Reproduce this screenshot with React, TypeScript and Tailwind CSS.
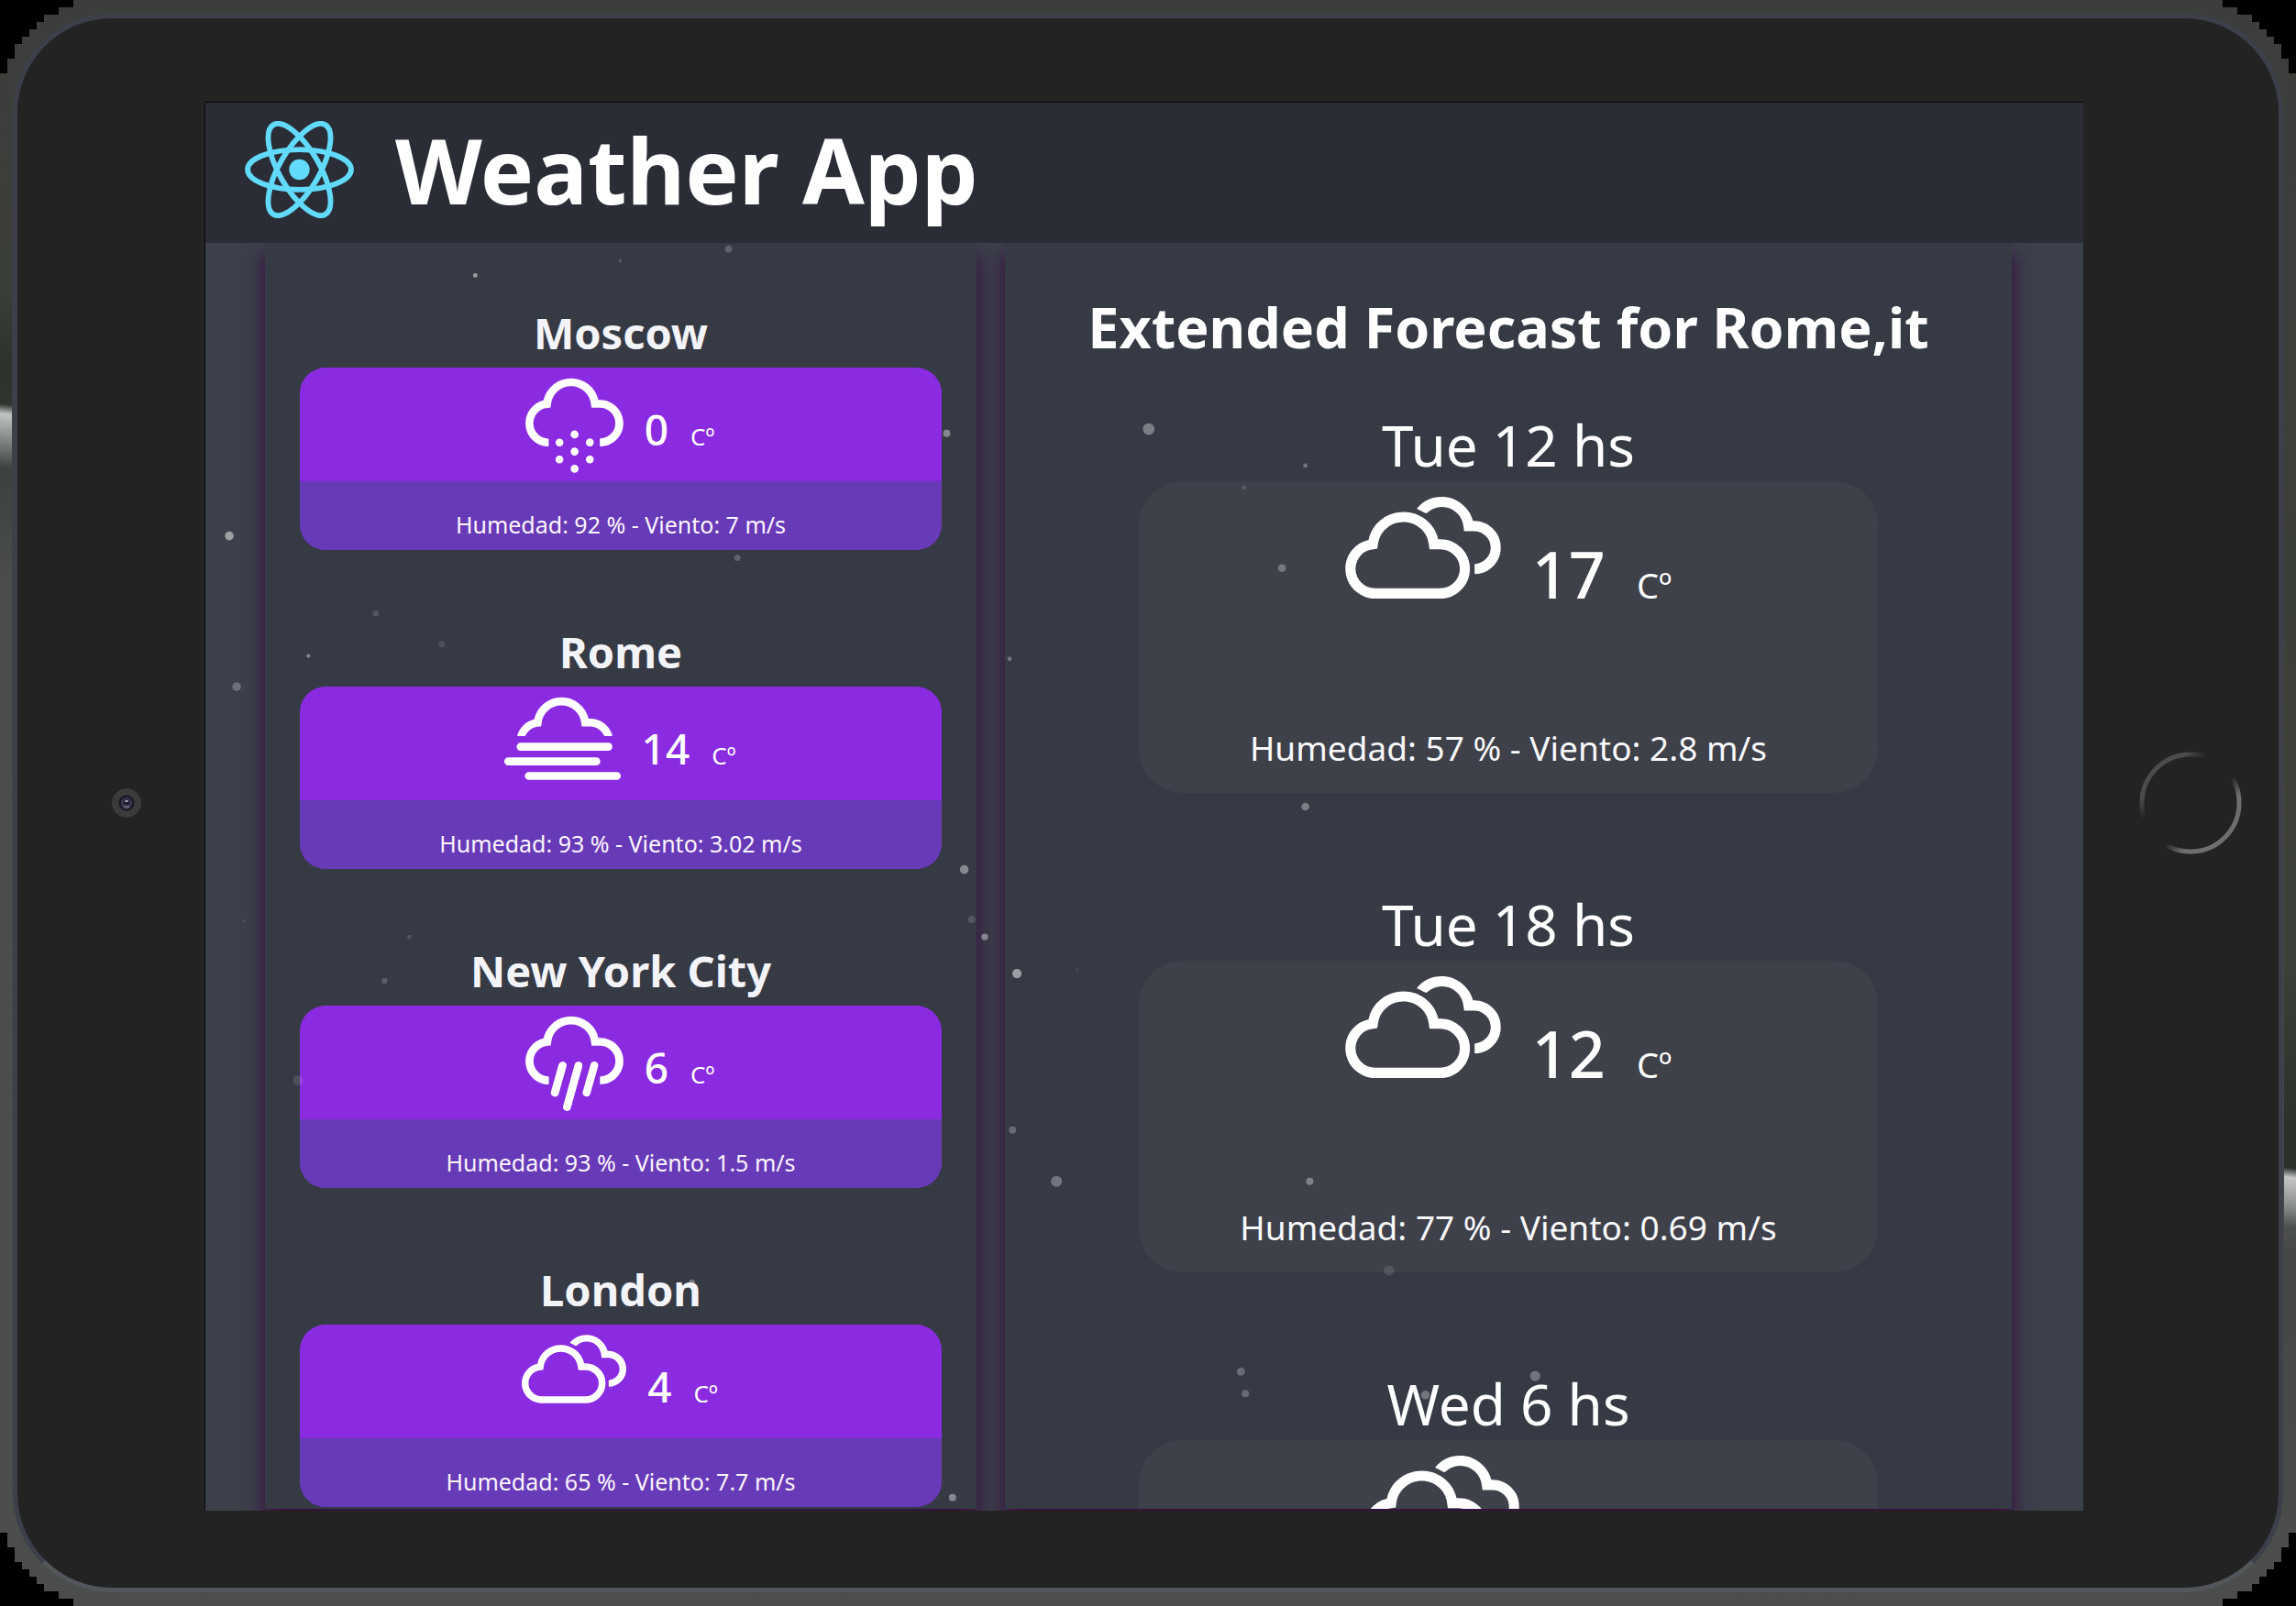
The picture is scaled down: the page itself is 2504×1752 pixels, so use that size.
import type { IconType } from "react-icons";
import { WiSnow, WiFog, WiRain, WiCloudy } from "react-icons/wi";

type Icon = { glyph: IconType; viewBox: string; size: string };

const snow: Icon = { glyph: WiSnow, viewBox: "4.64 7.3 20.72 20.2", size: "w-[107px] h-[104px]" };
const fog: Icon = { glyph: WiFog, viewBox: "2.62 7.3 24.75 20.2", size: "w-[127px] h-[104px]" };
const rain: Icon = { glyph: WiRain, viewBox: "4.64 7.3 20.73 20.2", size: "w-[107px] h-[104px]" };
const cloudy: Icon = { glyph: WiCloudy, viewBox: "3.89 7.3 22.21 20.2", size: "w-[114px] h-[104px]" };

const cities = [
  { name: "Moscow", icon: snow, temp: 0, details: "Humedad: 92 % - Viento: 7 m/s" },
  { name: "Rome", icon: fog, temp: 14, details: "Humedad: 93 % - Viento: 3.02 m/s" },
  { name: "New York City", icon: rain, temp: 6, details: "Humedad: 93 % - Viento: 1.5 m/s" },
  { name: "London", icon: cloudy, temp: 4, details: "Humedad: 65 % - Viento: 7.7 m/s" },
];

const forecast = [
  { when: "Tue 12 hs", temp: 17, details: "Humedad: 57 % - Viento: 2.8 m/s" },
  { when: "Tue 18 hs", temp: 12, details: "Humedad: 77 % - Viento: 0.69 m/s" },
  { when: "Wed 6 hs", temp: 9, details: "" },
];

// x, y, radius, opacity
const particles = [
  [324, 188, 1.5, 0.5], [423, 178, 1, 0.2], [497, 170, 2.5, 0.2], [646, 296, 2.5, 0.4],
  [156, 366, 3, 0.5], [161, 469, 3, 0.25], [210, 448, 1.3, 0.4], [256, 419, 2, 0.15],
  [301, 440, 2.2, 0.12], [503, 381, 2.2, 0.2], [784, 293, 4, 0.35], [891, 318, 1.5, 0.3],
  [849, 333, 1.5, 0.15], [875, 388, 2.7, 0.3], [689, 450, 1.5, 0.3], [891, 551, 2.7, 0.35],
  [658, 594, 3, 0.4], [663, 628, 2.5, 0.15], [672, 640, 2.3, 0.4], [694, 665, 3.2, 0.5],
  [735, 662, 0.8, 0.1], [279, 640, 1.5, 0.15], [262, 670, 2, 0.18], [166, 629, 1, 0.1],
  [203, 738, 3.5, 0.12], [691, 772, 2.5, 0.25], [721, 807, 3.8, 0.3], [894, 807, 2.5, 0.35],
  [948, 868, 3.5, 0.12], [847, 937, 2.8, 0.25], [850, 952, 2.5, 0.25], [1048, 940, 3.5, 0.3],
  [973, 953, 3, 0.3], [650, 1023, 2.5, 0.4], [472, 876, 2, 0.3],
];

function ReactLogo() {
  return (
    <svg viewBox="-11.7 -10.4 23.4 20.8" className="h-[106px] w-[119px] shrink-0" aria-hidden="true">
      <circle r="2.2" fill="#61dafb" />
      <g fill="none" stroke="#61dafb" strokeWidth="1.15">
        <ellipse rx="11.1" ry="4.3" />
        <ellipse rx="11.1" ry="4.3" transform="rotate(60)" />
        <ellipse rx="11.1" ry="4.3" transform="rotate(120)" />
      </g>
    </svg>
  );
}

function Corner({ className }: { className: string }) {
  return (
    <svg viewBox="0 0 80 80" shapeRendering="crispEdges" className={`absolute size-20 ${className}`} aria-hidden="true">
      <path d="M0 0H80V8H64V16H48V24H40V32H32V40H24V48H16V64H8V80H0Z" fill="#000" />
    </svg>
  );
}

function Camera() {
  return (
    <svg viewBox="0 0 32 32" className="size-8" aria-hidden="true">
      <circle cx="16" cy="16" r="16" fill="#3b3b3b" />
      <circle cx="16" cy="16" r="8.5" fill="#17151f" />
      <circle cx="16" cy="16" r="6.5" fill="#35324a" />
      <ellipse cx="16" cy="20" rx="3.5" ry="2" fill="#5c5a70" />
      <circle cx="16" cy="15.5" r="3" fill="#1d1b2c" />
      <ellipse cx="16" cy="14" rx="1.6" ry="1" fill="#cfcfe0" />
    </svg>
  );
}

function HomeRing() {
  return (
    <svg viewBox="0 0 112 112" className="size-28" aria-hidden="true">
      <defs>
        <linearGradient id="ring" x1="0.15" y1="0.15" x2="0.85" y2="0.85">
          <stop offset="0" stopColor="#4c4c4c" />
          <stop offset="0.1" stopColor="#4c4c4c" />
          <stop offset="0.27" stopColor="#4c4c4c" stopOpacity="0" />
          <stop offset="0.62" stopColor="#6e6e6e" stopOpacity="0" />
          <stop offset="0.8" stopColor="#6e6e6e" />
          <stop offset="1" stopColor="#6e6e6e" />
        </linearGradient>
      </defs>
      <circle cx="56" cy="56" r="53" fill="none" stroke="url(#ring)" strokeWidth="5" />
    </svg>
  );
}

function CityCard({ name, icon, temp, details }: (typeof cities)[number]) {
  const Glyph = icon.glyph;
  return (
    <article>
      <h2 className="text-center text-[47px] leading-[76px] font-bold text-[#f3f4f8]">{name}</h2>
      <div className="overflow-hidden rounded-[28px] bg-[#8a2be2]">
        <div className="flex justify-center gap-[23px] pt-[11px] pr-[2px] pb-px">
          <Glyph viewBox={icon.viewBox} className={icon.size} />
          <p className="flex items-baseline gap-6">
            <span className="text-[46px] leading-[112px] font-medium">{temp}</span>
            <span className="text-[26px] leading-[26px]">Cº</span>
          </p>
        </div>
        <p className="bg-[#673ab7] pt-5 text-center text-[25px] leading-[55px] text-[#fbf5ff]">{details}</p>
      </div>
    </article>
  );
}

function ForecastCard({ when, temp, details }: (typeof forecast)[number]) {
  return (
    <article>
      <h3 className="text-center text-[62px] leading-[79px]">{when}</h3>
      <div className="rounded-[48px] bg-[#3e404a]">
        <div className="flex justify-center gap-[34px] pt-[17px]">
          <WiCloudy viewBox="3.89 7.3 22.21 14.55" className="h-[111px] w-[170px]" />
          <p className="flex items-baseline gap-[34px]">
            <span className="text-[70px] leading-[168px] font-medium">{temp}</span>
            <span className="text-[38px] leading-[38px]">Cº</span>
          </p>
        </div>
        <p className="mt-[57px] min-h-[98px] text-center text-[37px] leading-[98px] text-[#f8f9fb]">{details}</p>
      </div>
    </article>
  );
}

export default function App() {
  return (
    <div className="relative flex h-screen overflow-hidden bg-linear-to-b from-[#3c3e3b] to-[#4c4e4b] px-[14px] py-[15px] font-['Noto_Sans','Open_Sans',sans-serif] text-white">
      <div className="absolute inset-y-0 left-0 w-[13px] bg-[linear-gradient(186deg,#3c3e3b_0%,#3b3f39_18%,#2c312c_23%,#303530_25.2%,#bfc3c4_25.8%,#8a8f8e_27.2%,#5c615f_28.4%,#3a4040_29.2%,#3f4444_31%,#4a4d49_36%,#4c4e4b_100%)]" />
      <div className="absolute inset-y-0 right-0 w-[13px] bg-[linear-gradient(186deg,#3c3e3b_0%,#3b4038_60%,#2c312c_70%,#2c312c_72.7%,#c4c6c7_73.3%,#8d9090_75%,#4d5050_76.4%,#444746_78%,#4c4e4b_100%)]" />
      <Corner className="top-0 left-0" />
      <Corner className="top-0 right-0 rotate-90" />
      <Corner className="right-0 bottom-0 rotate-180" />
      <Corner className="bottom-0 left-0 -rotate-90" />

      <div className="relative flex flex-1 rounded-[108px] border-[5px] border-[#3d3f4a] border-b-[#53565a] bg-[#232323]">
        <div className="flex w-[205px] shrink-0 items-center justify-center pl-8">
          <Camera />
        </div>

        <main className="relative mt-[92px] mb-[84px] flex min-w-0 flex-1 flex-col overflow-hidden bg-[#3c404b] shadow-[-1px_-1px_0_#08080a]">
          <header className="relative z-10 flex items-center gap-[45px] bg-[#2a2d35] pb-[7px] pl-[43px]">
            <ReactLogo />
            <h1 className="text-[98px] leading-[146px] font-bold">Weather App</h1>
          </header>

          <div className="grid min-h-0 flex-1 grid-cols-[776fr_1098fr] grid-rows-[minmax(0,1fr)] gap-x-[31px] pr-[78px] pb-[2px] pl-[65px]">
            <section className="overflow-hidden bg-[#363a45] px-[38px] pt-[60px] shadow-[0_14px_18px_2px_#38103f]">
              <div className="flex flex-col gap-[73px]">
                {cities.map((city) => (
                  <CityCard key={city.name} {...city} />
                ))}
              </div>
            </section>

            <section className="overflow-hidden bg-[#363a45] pt-[50px] shadow-[0_14px_18px_2px_#38103f]">
              <h2 className="mb-[47px] text-center text-[61px] leading-[84px] font-bold">
                Extended Forecast for Rome,it
              </h2>
              <div className="flex flex-col gap-[104px] px-[146px]">
                {forecast.map((slot) => (
                  <ForecastCard key={slot.when} {...slot} />
                ))}
              </div>
            </section>
          </div>

          <svg viewBox="140 70 1282 962" className="pointer-events-none absolute inset-0 size-full" aria-hidden="true">
            {particles.map(([x, y, r, o]) => (
              <circle key={`${x}-${y}`} cx={x} cy={y} r={r} fill="#fff" opacity={o} />
            ))}
          </svg>
        </main>

        <div className="flex w-[213px] shrink-0 items-center justify-center pl-5">
          <button type="button" aria-label="Home" className="rounded-full">
            <HomeRing />
          </button>
        </div>
      </div>
    </div>
  );
}
